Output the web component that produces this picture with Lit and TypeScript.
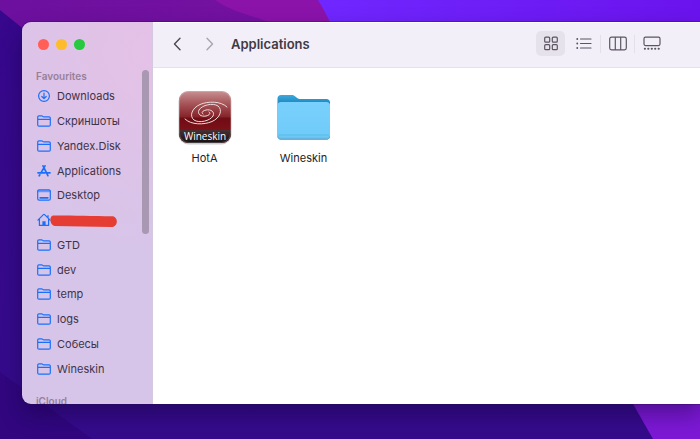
import { LitElement, html, svg, css } from "lit";
import { customElement, property } from "lit/decorators.js";
import { classMap } from "lit/directives/class-map.js";

type IconName = "downloads" | "folder" | "apps" | "desktop" | "home";

interface Place {
  label: string;
  icon: IconName;
  redacted?: boolean;
}

const places: Place[] = [
  { label: "Downloads", icon: "downloads" },
  { label: "Скриншоты", icon: "folder" },
  { label: "Yandex.Disk", icon: "folder" },
  { label: "Applications", icon: "apps" },
  { label: "Desktop", icon: "desktop" },
  { label: "", icon: "home", redacted: true },
  { label: "GTD", icon: "folder" },
  { label: "dev", icon: "folder" },
  { label: "temp", icon: "folder" },
  { label: "logs", icon: "folder" },
  { label: "Собесы", icon: "folder" },
  { label: "Wineskin", icon: "folder" },
];

const glyphs = {
  downloads: svg`<circle cx="7" cy="7" r="5.4"/><path d="M7 4v5.6M4.8 7.5 7 9.7l2.2-2.2"/>`,
  folder: svg`<path d="M.7 11V3.1c0-.8.5-1.3 1.3-1.3h2.4c.6 0 .9.2 1.3.5.4.4.7.5 1.2.5h5.1c.8 0 1.3.5 1.3 1.3V11c0 .8-.5 1.2-1.3 1.2H2c-.8 0-1.3-.4-1.3-1.2zM.7 5.3h12.6"/>`,
  apps: svg`<path d="M6 1.8 10.9 11.7M8 1.8 3.8 9.1M1 8.8h7M10.3 8.8H13M2.8 10.8l-.6 1" stroke-width="1.7"/>`,
  desktop: svg`<rect x=".7" y="1.8" width="12.6" height="10.4" rx="1.5"/><path d="M1 3.2h12" stroke-opacity=".55" stroke-width="2"/><path d="M3.2 9.8h7.6" stroke-width="1.8"/>`,
  home: svg`<path d="M.9 7.1 6.4 1.6c.4-.4.8-.4 1.2 0l5.5 5.5M11 4.9V2.5M2.4 6v6.4h9.2V6"/><path d="M5.4 13V8.2h3.2V13z" fill="currentColor" stroke="none"/>`,
};

@customElement("side-link")
class SideLink extends LitElement {
  @property({ attribute: false }) place!: Place;

  static styles = css`
    :host { display: flex; flex: 1; }
    .link {
      position: relative;
      display: flex;
      flex: 1;
      align-items: center;
      gap: 6px;
      color: #403449;
      text-decoration: none;
      font-size: 11px;
      line-height: 16px;
    }
    .glyph {
      width: 14px;
      height: 14px;
      color: #1a70fb;
      fill: none;
      stroke: currentColor;
      stroke-width: 1.2;
      stroke-linecap: round;
      stroke-linejoin: round;
    }
    .marker {
      position: absolute;
      left: 13px;
      top: 7px;
      width: 69px;
      height: 14px;
      fill: #e53c33;
    }
  `;

  render() {
    const { label, icon, redacted } = this.place;
    return html`<a class="link" href="#" aria-label=${label || "Home"}>
      <svg class="glyph" viewBox="0 0 14 14" aria-hidden="true">${glyphs[icon]}</svg>
      ${redacted
        ? html`<svg class="marker" viewBox="0 0 69 14" aria-hidden="true">
            <path d="M3 .5C20 .4 42 1 62 1.200c6.500 0 6.500 10.800-.5 10.800C42 11.600 22 11.500 5 11-.5 10.500-1 1 3 .5z" />
          </svg>`
        : html`<span>${label}</span>`}
    </a>`;
  }
}

@customElement("finder-sidebar")
class FinderSidebar extends LitElement {
  static styles = css`
    :host {
      position: relative;
      display: flex;
      flex-direction: column;
      overflow: hidden;
      border-right: 1px solid #d5c9e0;
      background:
        radial-gradient(circle at 100% 8%, #e5c1e6 0, #e5c1e600 55%),
        #d6c5e9;
    }
    .lights {
      display: flex;
      align-items: center;
      gap: 7px;
      height: 44px;
      padding: 0 16px;
    }
    .light {
      width: 11px;
      height: 11px;
      padding: 0;
      border: 0;
      border-radius: 50%;
    }
    .close { background: #ff5f57; }
    .minimise { background: #fdbc2d; }
    .zoom { background: #28c840; }
    .heading {
      margin: 0;
      padding: 0 14px;
      color: #978099;
      font-size: 10px;
      font-weight: 600;
      line-height: 16px;
    }
    .favourites { padding-top: 2px; }
    .places {
      display: flex;
      flex: 1;
      flex-direction: column;
      padding: 0 15px;
    }
    .cloud {
      height: 11px;
      padding-top: 12px;
      overflow: hidden;
    }
    .thumb {
      position: absolute;
      top: 48px;
      right: 3px;
      width: 7px;
      height: 164px;
      border-radius: 4px;
      background: #a898b2;
    }
  `;

  render() {
    return html`
      <div class="lights">
        <button class="light close" aria-label="Close"></button>
        <button class="light minimise" aria-label="Minimise"></button>
        <button class="light zoom" aria-label="Zoom"></button>
      </div>
      <h2 class="heading favourites">Favourites</h2>
      <nav class="places" aria-label="Favourites">
        ${places.map((p) => html`<side-link .place=${p}></side-link>`)}
      </nav>
      <h2 class="heading cloud">iCloud</h2>
      <div class="thumb"></div>
    `;
  }
}

const views = [
  {
    name: "Icons",
    art: svg`<rect x="2.700" y="2.200" width="5" height="5" rx="1"/><rect x="10.300" y="2.200" width="5" height="5" rx="1"/><rect x="2.700" y="9.700" width="5" height="5" rx="1"/><rect x="10.300" y="9.700" width="5" height="5" rx="1"/>`,
  },
  {
    name: "List",
    art: svg`<path d="M5.500 4h10.500M5.500 8.500h10.500M5.500 13h10.500"/><path d="M2.200 4h.1M2.200 8.500h.1M2.200 13h.1" stroke-width="1.800"/>`,
  },
  {
    name: "Columns",
    art: svg`<rect x=".7" y="2.200" width="16.600" height="12.700" rx="1.800"/><path d="M6.300 2.500v12M11.700 2.500v12"/>`,
  },
  {
    name: "Gallery",
    art: svg`<rect x="1" y="2.200" width="16" height="8.400" rx="1.500"/><path d="M1.800 13.700h.2M5.200 13.700h.2M8.700 13.700h.2M12.100 13.700h.2M15.600 13.700h.2" stroke-width="2"/>`,
  },
];

@customElement("finder-toolbar")
class FinderToolbar extends LitElement {
  static styles = css`
    :host {
      display: flex;
      align-items: center;
      height: 43px;
      padding: 0 32px 2px 18px;
      border-bottom: 1px solid #e6e2ea;
      background: #f3eff9;
      box-shadow: inset 0 1px #fff;
    }
    button {
      padding: 0;
      border: 0;
      background: none;
    }
    .history { display: flex; gap: 18px; }
    .arrow {
      display: flex;
      width: 14px;
      height: 14px;
      color: #4d4851;
    }
    .forward { color: #aaa4b0; }
    svg {
      fill: none;
      stroke: currentColor;
      stroke-linecap: round;
      stroke-linejoin: round;
    }
    .chevron { width: 14px; height: 14px; stroke-width: 1.4; }
    .title {
      flex: 1;
      margin: 0;
      padding-left: 14px;
      color: #3f3a44;
      font-size: 13px;
      font-weight: 600;
      line-height: 16px;
    }
    .views { display: flex; align-items: center; }
    .view {
      display: flex;
      align-items: center;
      justify-content: center;
      width: 29px;
      height: 25px;
      margin: 0 2px;
      border-radius: 5px;
      color: #5b5561;
    }
    .selected { background: #e6e2ec; }
    .art { width: 18px; height: 17px; stroke-width: 1.2; }
    .rule { width: 1px; height: 18px; background: #e4dfe9; }
  `;

  render() {
    return html`
      <div class="history">
        <button class="arrow" aria-label="Back">
          <svg class="chevron" viewBox="0 0 14 14"><path d="M9 1.200 3.500 7 9 12.800" /></svg>
        </button>
        <button class="arrow forward" aria-label="Forward">
          <svg class="chevron" viewBox="0 0 14 14"><path d="M4 1.200 9.500 7 4 12.800" /></svg>
        </button>
      </div>
      <h1 class="title">Applications</h1>
      <div class="views">
        ${views.map(
          (v, i) => html`
            ${i > 1 ? html`<span class="rule"></span>` : ""}
            <button
              class=${classMap({ view: true, selected: i === 0 })}
              aria-label=${v.name}
              aria-pressed=${i === 0 ? "true" : "false"}
            >
              <svg class="art" viewBox="0 0 18 17">${v.art}</svg>
            </button>
          `
        )}
      </div>
    `;
  }
}

const wineskinApp = html`<svg class="picture" viewBox="0 0 56 56" aria-hidden="true">
  <defs>
    <linearGradient id="wine" x2="0" y2="1">
      <stop offset="0" stop-color="#c79192" />
      <stop offset=".25" stop-color="#a65357" />
      <stop offset=".5" stop-color="#852329" />
      <stop offset=".52" stop-color="#700c14" />
      <stop offset=".76" stop-color="#7c1119" />
    </linearGradient>
    <linearGradient id="band" x2="0" y2="1">
      <stop offset="0" stop-color="#4b3033" />
      <stop offset="1" stop-color="#151012" />
    </linearGradient>
    <clipPath id="tile"><rect x="2" y="2" width="52" height="52" rx="9" /></clipPath>
  </defs>
  <rect x="1.500" y="2.500" width="53" height="53" rx="10" fill="#000" opacity=".2" />
  <g clip-path="url(#tile)">
    <rect x="2" y="2" width="52" height="52" fill="url(#wine)" />
    <rect x="2" y="41" width="52" height="13" fill="url(#band)" />
  </g>
  <rect x="2.500" y="2.500" width="51" height="51" rx="9" fill="none" stroke="#fff" stroke-opacity=".2" />
  <g fill="none" stroke="#ecdcdc" stroke-linecap="round">
    <path d="M8 30C14 36 27 36 35 32.500C43 29 46 21 41 17C36 13.500 25 16 22 21C20 25 24 28 29 27C33 26 34 24 32 23" />
    <path d="M50 18C44 12 31 12 23 15.500C15 19 12 27 17 31C22 34.500 33 32 36 27C38 23 34 20 29 21C25 22 24 24 26 25" />
  </g>
  <text class="band-text" x="28" y="51" text-anchor="middle">Wineskin</text>
</svg>`;

const blueFolder = html`<svg class="picture" viewBox="0 0 56 56" aria-hidden="true">
  <defs>
    <linearGradient id="back" x2="0" y2="1">
      <stop offset="0" stop-color="#3fa9dc" />
      <stop offset=".2" stop-color="#1686c0" />
    </linearGradient>
    <linearGradient id="front" x2="0" y2="1">
      <stop offset="0" stop-color="#79d0fc" />
      <stop offset=".9" stop-color="#70cbf9" />
      <stop offset="1" stop-color="#5fb9e8" />
    </linearGradient>
  </defs>
  <path d="M1.500 9.500C1.500 7.500 3 6 5 6H15.500c1.500 0 2.500.5 3.500 1.300l2.500 2c.8.600 1.500.7 2.500.7H50.500c2 0 3.500 1.500 3.500 3.500v33.500c0 2-1.500 3.500-3.500 3.500H5C3 50.500 1.500 49 1.500 47z" fill="url(#back)" />
  <rect x="1.500" y="13" width="52.500" height="37.500" rx="3.500" fill="url(#front)" />
  <path d="M2.500 46h50.500" stroke="#58b8e9" />
  <path d="M2 47.500c.3 1.800 1.400 2.600 3 2.600H50.500c1.700 0 2.800-.8 3-2.600" fill="none" stroke="#6aa7c6" />
</svg>`;

@customElement("finder-items")
class FinderItems extends LitElement {
  static styles = css`
    :host {
      display: flex;
      flex: 1;
      flex-wrap: wrap;
      align-content: flex-start;
      gap: 16px;
      padding: 21px 10px;
      background: #fff;
    }
    .item {
      display: flex;
      flex-direction: column;
      align-items: center;
      gap: 5px;
      width: 83px;
      color: #242424;
      font-size: 11px;
      line-height: 16px;
      text-decoration: none;
    }
    .picture { width: 56px; height: 56px; }
    .band-text {
      fill: #fff;
      font-family: "Open Sans", "Noto Sans", sans-serif;
      font-size: 10px;
      font-weight: 500;
    }
  `;

  render() {
    return html`
      <a class="item" href="#">${wineskinApp}<span>HotA</span></a>
      <a class="item" href="#">${blueFolder}<span>Wineskin</span></a>
    `;
  }
}

@customElement("app-root")
class AppRoot extends LitElement {
  static styles = css`
    :host {
      position: relative;
      display: flex;
      box-sizing: border-box;
      min-height: 100vh;
      padding: 22px 0 35px 22px;
      overflow: hidden;
      font-family: Inter, "Noto Sans", sans-serif;
    }
    .wallpaper {
      position: absolute;
      inset: 0;
      width: 100%;
      height: 100%;
    }
    .window {
      position: relative;
      display: grid;
      grid-template-columns: 131px 1fr;
      flex: 1;
      border-radius: 9px 0 0 9px;
      overflow: hidden;
    }
    .frame {
      display: flex;
      flex: 1;
      position: relative;
      border-radius: 9px 0 0 9px;
      box-shadow: 0 0 0 1px #2a085855, 0 10px 22px #0d002f66;
    }
    .main { display: flex; flex-direction: column; }
  `;

  render() {
    return html`
      <svg class="wallpaper" viewBox="0 0 700 439" preserveAspectRatio="none" aria-hidden="true">
        <defs>
          <linearGradient id="base" x2="0" y2="1">
            <stop offset="0" stop-color="#37078c" />
            <stop offset="1" stop-color="#350b8b" />
          </linearGradient>
          <linearGradient id="plum"><stop offset="0" stop-color="#6d109f" /><stop offset="1" stop-color="#7611a2" /></linearGradient>
          <linearGradient id="violet"><stop offset="0" stop-color="#7027ff" /><stop offset="1" stop-color="#6b13ed" /></linearGradient>
        </defs>
        <rect width="700" height="439" fill="url(#base)" />
        <path d="M0 0h340v60H62L0 10z" fill="url(#plum)" />
        <path d="M215 0h130v40h-50C285 20 240 18 215 0z" fill="#8b13aa" />
        <path d="M318 0h382v60H345Q332 22 318 0z" fill="url(#violet)" />
        <path d="M0 372Q45 405 92 439H0z" fill="#31067f" />
        <path d="M620 381h80v58h-47z" fill="#7d18d5" />
      </svg>
      <div class="frame">
        <div class="window">
          <finder-sidebar></finder-sidebar>
          <main class="main">
            <finder-toolbar></finder-toolbar>
            <finder-items></finder-items>
          </main>
        </div>
      </div>
    `;
  }
}
